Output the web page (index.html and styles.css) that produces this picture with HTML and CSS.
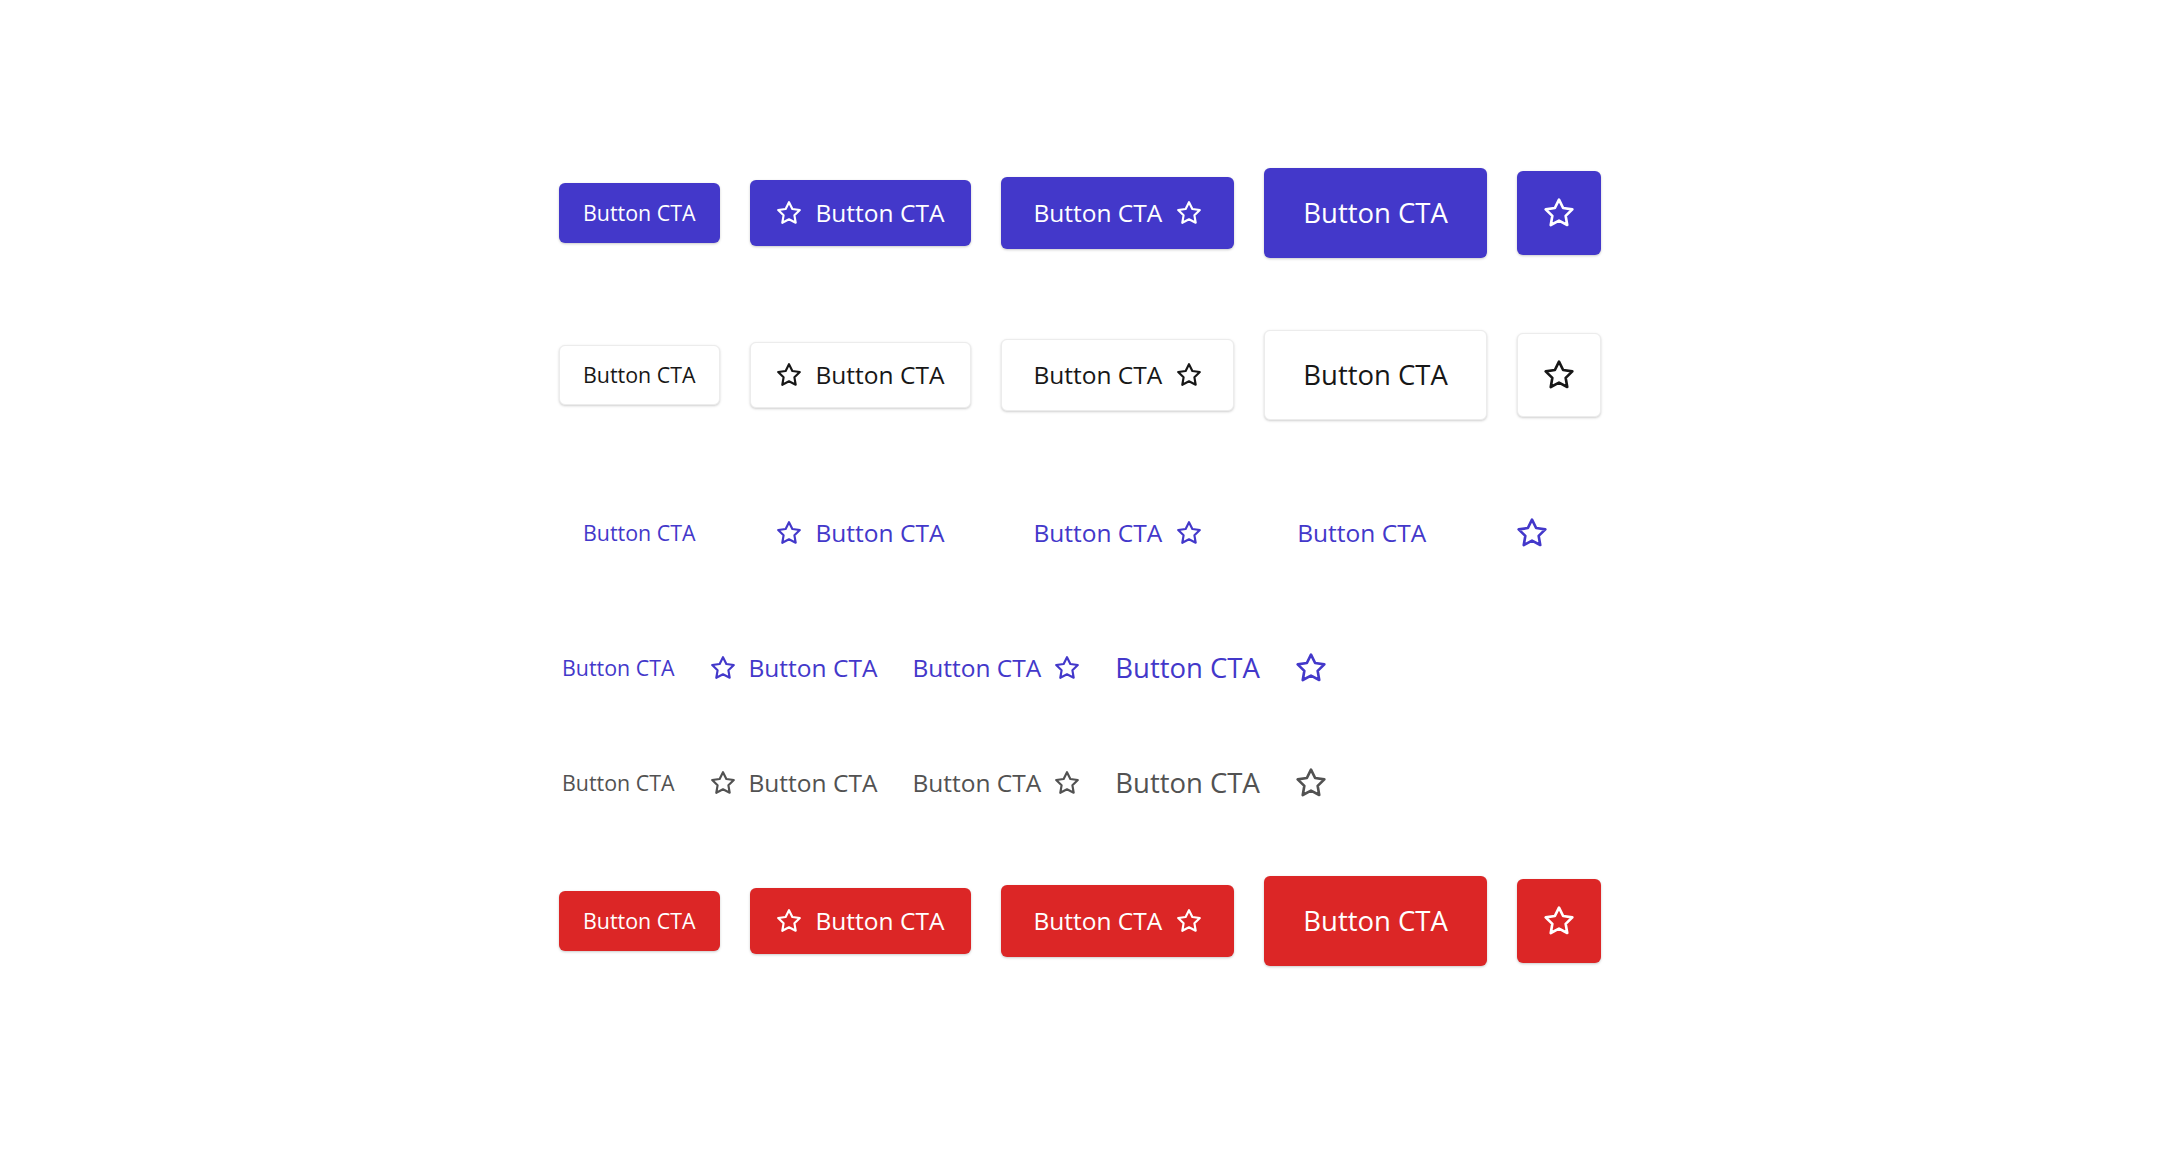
FILE: index.html
```html
<!DOCTYPE html>
<html lang="en">
<head>
<meta charset="utf-8">
<title>Buttons</title>
<link rel="stylesheet" href="styles.css">
</head>
<body>
<svg class="defs" width="0" height="0" aria-hidden="true">
  <symbol id="star" viewBox="0 0 24 24">
    <polygon points="12 2 15.09 8.26 22 9.27 17 14.14 18.18 21.02 12 17.77 5.82 21.02 7 14.14 2 9.27 8.91 8.26 12 2" fill="none" stroke="currentColor" stroke-width="2" stroke-linejoin="round"/>
  </symbol>
</svg>
<main class="board">
  <div class="row row-1">
    <button class="btn primary sm">Button CTA</button>
    <button class="btn primary md-l"><svg class="ic ic-md"><use href="#star"/></svg>Button CTA</button>
    <button class="btn primary md-r">Button CTA<svg class="ic ic-md"><use href="#star"/></svg></button>
    <button class="btn primary lg">Button CTA</button>
    <button class="btn primary icon"><svg class="ic ic-lg"><use href="#star"/></svg></button>
  </div>
  <div class="row row-2">
    <button class="btn secondary sm">Button CTA</button>
    <button class="btn secondary md-l"><svg class="ic ic-md"><use href="#star"/></svg>Button CTA</button>
    <button class="btn secondary md-r">Button CTA<svg class="ic ic-md"><use href="#star"/></svg></button>
    <button class="btn secondary lg">Button CTA</button>
    <button class="btn secondary icon"><svg class="ic ic-lg"><use href="#star"/></svg></button>
  </div>
  <div class="row row-3">
    <button class="btn ghost sm">Button CTA</button>
    <button class="btn ghost md-l"><svg class="ic ic-md"><use href="#star"/></svg>Button CTA</button>
    <button class="btn ghost md-r">Button CTA<svg class="ic ic-md"><use href="#star"/></svg></button>
    <button class="btn ghost ghost-md">Button CTA</button>
    <button class="btn ghost ghost-icon"><svg class="ic ic-lg"><use href="#star"/></svg></button>
  </div>
  <div class="row row-4 links">
    <a class="link sm-t">Button CTA</a>
    <a class="link md-t"><svg class="ic ic-md"><use href="#star"/></svg>Button CTA</a>
    <a class="link md-t">Button CTA<svg class="ic ic-md"><use href="#star"/></svg></a>
    <a class="link lg-t">Button CTA</a>
    <a class="link"><svg class="ic ic-lg"><use href="#star"/></svg></a>
  </div>
  <div class="row row-5 links muted">
    <a class="link sm-t">Button CTA</a>
    <a class="link md-t"><svg class="ic ic-md"><use href="#star"/></svg>Button CTA</a>
    <a class="link md-t">Button CTA<svg class="ic ic-md"><use href="#star"/></svg></a>
    <a class="link lg-t">Button CTA</a>
    <a class="link"><svg class="ic ic-lg"><use href="#star"/></svg></a>
  </div>
  <div class="row row-6">
    <button class="btn danger sm">Button CTA</button>
    <button class="btn danger md-l"><svg class="ic ic-md"><use href="#star"/></svg>Button CTA</button>
    <button class="btn danger md-r">Button CTA<svg class="ic ic-md"><use href="#star"/></svg></button>
    <button class="btn danger lg">Button CTA</button>
    <button class="btn danger icon"><svg class="ic ic-lg"><use href="#star"/></svg></button>
  </div>
</main>
</body>
</html>
```

FILE: styles.css
```css
html, body {
  margin: 0;
  padding: 0;
  background: #ffffff;
}

body {
  font-family: "Open Sans", "Noto Sans", "Liberation Sans", sans-serif;
  width: 2160px;
  height: 1152px;
  overflow: hidden;
}

.defs {
  position: absolute;
  width: 0;
  height: 0;
  overflow: hidden;
}

.board {
  display: flex;
  flex-direction: column;
  padding: 132px 0 0 559px;
}

.row {
  display: flex;
  align-items: center;
  gap: 30px;
}

.row-1 { height: 162px; }
.row-2 { height: 162px; }
.row-3 { height: 154px; }
.row-4 { height: 116px; }
.row-5 { height: 114px; }
.row-6 { height: 162px; }

.links {
  gap: 35px;
  padding-left: 3px;
}

/* buttons */
.btn {
  display: inline-flex;
  align-items: center;
  justify-content: center;
  box-sizing: border-box;
  border: 0;
  border-radius: 6px;
  font-family: inherit;
  font-weight: 400;
  line-height: 1;
  margin: 0;
  cursor: pointer;
  gap: 14px;
}

.sm { height: 60px; padding: 0 24px; font-size: 21.4px; }
.md-l { height: 66px; padding: 0 27px 0 26px; font-size: 24.5px; }
.md-r { height: 72px; padding: 0 32px; font-size: 24.5px; }
.lg { height: 90px; padding: 0 39px; font-size: 27.5px; }
.icon { width: 84px; height: 84px; padding: 0; }

.ghost-md { height: 72px; padding: 0 33px; font-size: 24.5px; }
.ghost-icon { height: 72px; padding: 0 27px; }

.primary {
  background: #4338ca;
  color: #ffffff;
  box-shadow: 0 1px 3px rgba(0, 0, 0, 0.14), 0 1px 2px rgba(0, 0, 0, 0.08);
}

.danger {
  background: #dc2626;
  color: #ffffff;
  box-shadow: 0 1px 3px rgba(0, 0, 0, 0.14), 0 1px 2px rgba(0, 0, 0, 0.08);
}

.secondary {
  background: #ffffff;
  color: #171717;
  border: 1px solid #ececec;
  box-shadow: 0 1px 3px rgba(0, 0, 0, 0.14), 0 1px 2px rgba(0, 0, 0, 0.06);
}

.secondary.sm { padding: 0 23px; }
.secondary.md-l { padding: 0 26px 0 25px; }
.secondary.md-r { padding: 0 31px; }
.secondary.lg { padding: 0 38px; }

.ghost {
  background: transparent;
  color: #4338ca;
}

/* links */
.link {
  display: inline-flex;
  align-items: center;
  gap: 13px;
  color: #4338ca;
  line-height: 1;
  text-decoration: none;
  cursor: pointer;
}

.muted .link {
  color: #525252;
}

.sm-t { font-size: 21.4px; }
.md-t { font-size: 24.5px; }
.lg-t { font-size: 27.5px; }

/* icons */
.ic {
  display: block;
  flex: none;
  color: currentColor;
}

.ic-md { width: 26px; height: 26px; }
.ic-lg { width: 32px; height: 32px; }
```
